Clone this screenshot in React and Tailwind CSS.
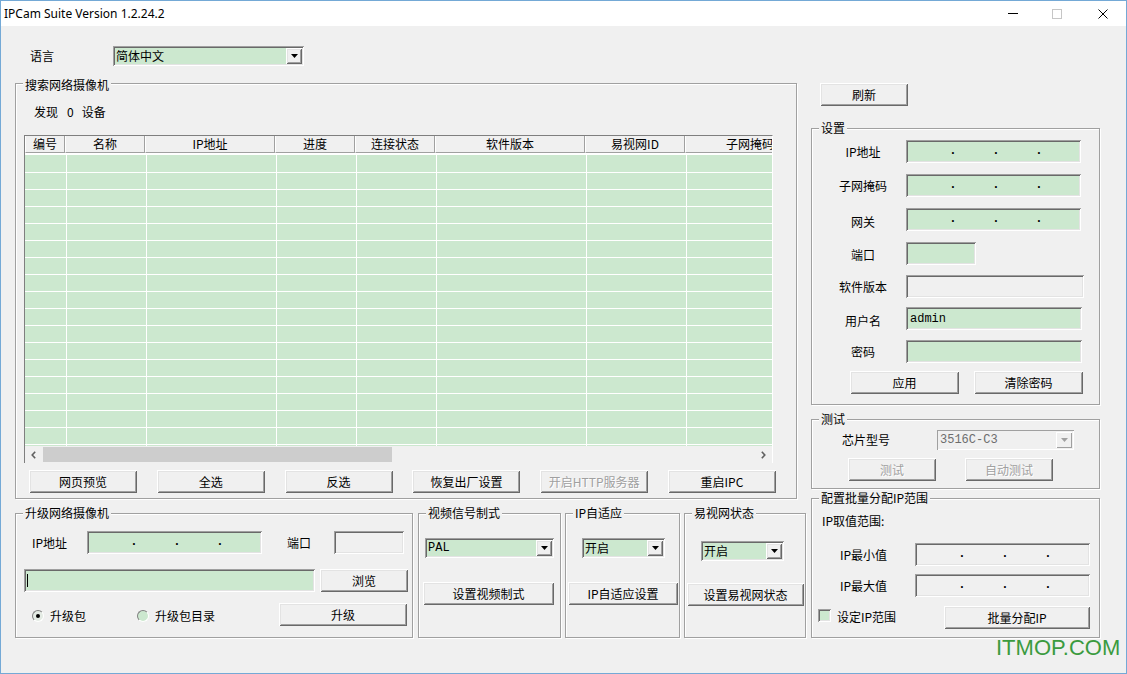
import React from "react";

const RAISED =
  "bg-[#f0f0f0] shadow-[inset_1px_1px_0_#ffffff,inset_-1px_-1px_0_#696969,inset_2px_2px_0_#e3e3e3,inset_-2px_-2px_0_#a0a0a0]";
const RAISED_DIS =
  "bg-[#f0f0f0] shadow-[inset_1px_1px_0_#ffffff,inset_-1px_-1px_0_#a0a0a0]";
const SUNKEN =
  "shadow-[inset_1px_1px_0_#a0a0a0,inset_-1px_-1px_0_#ffffff,inset_2px_2px_0_#696969,inset_-2px_-2px_0_#e3e3e3]";
const MONO = "font-['Liberation_Mono',monospace]";

function Btn({ className = "", disabled, children }) {
  return (
    <button
      type="button"
      className={`${RAISED} flex items-center justify-center shrink-0 h-[23px] leading-[16px] whitespace-nowrap ${
        disabled ? "text-[#a0a0a0] [text-shadow:1px_1px_0_#ffffff]" : "text-black"
      } ${className}`}
    >
      {children}
    </button>
  );
}

function Group({ title, className = "", labelClass = "top-[-9px]", children }) {
  return (
    <div
      className={`relative border border-[#a0a0a0] shadow-[inset_1px_1px_0_#ffffff,1px_1px_0_#ffffff] shrink-0 ${className}`}
    >
      <div
        className={`absolute left-[7px] ${labelClass} px-[2px] bg-[#f0f0f0] leading-[16px] whitespace-nowrap`}
      >
        {title}
      </div>
      {children}
    </div>
  );
}

function IpBox({ className = "", bg = "bg-[#cce8cf]" }) {
  return (
    <div className={`${SUNKEN} ${bg} h-[23px] flex items-center pl-[43px] gap-[35px] shrink-0 ${className}`}>
      {[0, 1, 2].map((i) => (
        <span
          key={i}
          className="w-[8px] text-center leading-none mb-[3px] font-['Liberation_Sans',sans-serif] font-bold text-[12px]"
        >
          .
        </span>
      ))}
    </div>
  );
}

function Combo({ className = "", text, mono, disabled }) {
  return (
    <div
      className={`${
        disabled
          ? "shadow-[inset_1px_1px_0_#a0a0a0,inset_-1px_-1px_0_#ffffff] bg-[#f0f0f0]"
          : SUNKEN + " bg-[#cce8cf]"
      } h-[20px] flex p-[2px] shrink-0 ${className}`}
    >
      <div
        className={`flex-1 flex items-center pl-[1px] leading-[16px] whitespace-nowrap ${mono ? MONO : ""} ${
          disabled ? "text-[#6d6d6d]" : ""
        }`}
      >
        {text}
      </div>
      <div className={`${disabled ? RAISED_DIS : RAISED} w-[16px] flex items-center justify-center`}>
        <svg width="7" height="4" viewBox="0 0 7 4">
          <polygon points="0,0 7,0 3.5,4" fill={disabled ? "#a0a0a0" : "#000000"} />
        </svg>
      </div>
    </div>
  );
}

const COLS = [
  ["编号", "w-[40px]"],
  ["名称", "w-[80px]"],
  ["IP地址", "w-[130px]"],
  ["进度", "w-[80px]"],
  ["连接状态", "w-[80px]"],
  ["软件版本", "w-[150px]"],
  ["易视网ID", "w-[100px]"],
  ["子网掩码", "w-[130px]"],
];

function Table() {
  return (
    <div className="mt-[15px] ml-[8px] w-[749px] h-[328px] flex flex-col overflow-hidden border-t border-l border-[#7f7f7f] border-r border-r-white">
      <div className="flex h-[17px] shrink-0 bg-[#f0f0f0]">
        {COLS.map(([t, w]) => (
          <div
            key={t}
            className={`${w} shrink-0 h-full border-l border-l-white border-r border-r-[#a0a0a0] border-b border-b-[#a0a0a0] flex items-center justify-center leading-[16px] whitespace-nowrap`}
          >
            {t}
          </div>
        ))}
      </div>
      <div className="flex-1 overflow-hidden bg-white pt-[2px]">
        {Array.from({ length: 18 }).map((_, i) => (
          <div
            key={i}
            className={`flex pl-[2px] bg-[#cce8cf] w-max border-b border-white ${i === 0 ? "h-[18px]" : "h-[17px]"}`}
          >
            {COLS.map(([t, w]) => (
              <div key={t} className={`${w} shrink-0 h-full border-r border-white`} />
            ))}
          </div>
        ))}
      </div>
      <div className="h-[17px] shrink-0 flex bg-[#f0f0f0]">
        <div className="w-[17px] flex items-center justify-center">
          <svg width="5" height="8" viewBox="0 0 5 8">
            <polyline points="4.2,0.8 1.2,4 4.2,7.2" fill="none" stroke="#606060" strokeWidth="1.6" />
          </svg>
        </div>
        <div className="w-[349px] ml-[1px] my-[1px] bg-[#cdcdcd]" />
        <div className="ml-auto w-[17px] flex items-center justify-center">
          <svg width="5" height="8" viewBox="0 0 5 8">
            <polyline points="0.8,0.8 3.8,4 0.8,7.2" fill="none" stroke="#606060" strokeWidth="1.6" />
          </svg>
        </div>
      </div>
    </div>
  );
}

function Radio({ checked, className = "" }) {
  return (
    <div
      className={`w-[12px] h-[12px] rounded-full border border-t-[#808080] border-l-[#808080] border-b-white border-r-white flex items-center justify-center shrink-0 ${
        checked ? "bg-[#e4ebe4]" : "bg-[#cce8cf]"
      } ${className}`}
    >
      {checked && <div className="w-[4px] h-[4px] rounded-full bg-black" />}
    </div>
  );
}

export default function App() {
  return (
    <div className="relative w-[1127px] h-[674px] overflow-hidden border border-[#74a9d6] bg-[#f0f0f0] flex flex-col text-[12px] leading-[16px] text-black font-['Noto_Sans_CJK_SC',sans-serif]">
      {/* Title bar */}
      <div className="h-[25px] shrink-0 bg-white flex items-center pl-[3px]">
        <span className="font-['Segoe_UI','Noto_Sans',sans-serif] text-[12px]">IPCam Suite Version 1.2.24.2</span>
        <div className="ml-auto flex h-full">
          <div className="w-[46px] h-full flex items-center justify-center">
            <div className="w-[10px] h-[1px] bg-black ml-[3px]" />
          </div>
          <div className="w-[46px] h-full flex items-center justify-center">
            <div className="w-[10px] h-[10px] border border-[#c6c6c6]" />
          </div>
          <div className="w-[46px] h-full flex items-center justify-center">
            <svg width="10" height="10" viewBox="0 0 10 10">
              <path d="M0.5 0.5L9.5 9.5M9.5 0.5L0.5 9.5" stroke="#000" strokeWidth="1" />
            </svg>
          </div>
        </div>
      </div>

      {/* Body */}
      <div className="flex-1 flex pl-[14px]">
        {/* Left column */}
        <div className="w-[790px] shrink-0 flex flex-col">
          <div className="mt-[20px] h-[20px] flex items-center">
            <span className="w-[98px] pl-[15px] shrink-0">语言</span>
            <Combo className="w-[191px]" text="简体中文" />
          </div>

          <Group title="搜索网络摄像机" labelClass="top-[-7px]" className="w-[782px] h-[416px] mt-[17px]">
            <div className="mt-[20px] ml-[18px] flex items-center h-[16px]">
              <span>发现</span>
              <span className="ml-[9px]">0</span>
              <span className="ml-[8px]">设备</span>
            </div>
            <Table />
            <div className="mt-[7px] ml-[13px] flex gap-[19.8px]">
              {["网页预览", "全选", "反选", "恢复出厂设置", "开启HTTP服务器", "重启IPC"].map((t, i) => (
                <Btn key={t} className="w-[108px]" disabled={i === 4}>
                  {t}
                </Btn>
              ))}
            </div>
          </Group>

          <div className="mt-[14px] flex">
            <Group title="升级网络摄像机" className="w-[398px] h-[125px]">
              <div className="mt-[17px] pl-[16px] flex items-center h-[23px]">
                <span className="w-[55px] shrink-0">IP地址</span>
                <IpBox className="w-[175px]" />
                <span className="ml-[25px] w-[47px] shrink-0">端口</span>
                <div className={`${SUNKEN} bg-[#f0f0f0] w-[70px] h-[23px] shrink-0`} />
              </div>
              <div className="mt-[15px] pl-[8px] flex items-center h-[23px]">
                <div className={`${SUNKEN} bg-[#cce8cf] w-[291px] h-[23px] flex items-center pl-[3px] shrink-0`}>
                  <div className="w-[1px] h-[13px] bg-black" />
                </div>
                <Btn className="ml-[5px] w-[88px]">浏览</Btn>
              </div>
              <div className="mt-[11px] pl-[16px] flex items-center h-[23px]">
                <Radio checked className="mt-[3px]" />
                <span className="ml-[6px] mt-[3px]">升级包</span>
                <Radio className="ml-[51px] mt-[3px]" />
                <span className="ml-[6px] mt-[3px]">升级包目录</span>
                <Btn className="ml-[64px] w-[128px]">升级</Btn>
              </div>
            </Group>

            <Group title="视频信号制式" className="ml-[5px] w-[143px] h-[125px]">
              <Combo className="ml-[6px] mt-[24px] w-[129px]" text="PAL" mono />
              <Btn className="ml-[4px] mt-[24px] w-[131px]">设置视频制式</Btn>
            </Group>

            <Group title="IP自适应" className="ml-[4px] w-[115px] h-[125px]">
              <Combo className="ml-[16px] mt-[24px] w-[83px]" text="开启" />
              <Btn className="ml-[2px] mt-[24px] w-[110px]">IP自适应设置</Btn>
            </Group>

            <Group title="易视网状态" className="ml-[4px] w-[122px] h-[125px]">
              <Combo className="ml-[16px] mt-[27px] w-[83px]" text="开启" />
              <Btn className="ml-[2px] mt-[22px] w-[117px]">设置易视网状态</Btn>
            </Group>
          </div>
        </div>

        {/* Right column */}
        <div className="ml-[6px] w-[289px] shrink-0 flex flex-col">
          <Btn className="mt-[57px] ml-[9px] w-[88px]">刷新</Btn>

          <Group title="设置" className="mt-[22px] w-[289px] h-[277px]">
            <div className="mt-[11px] ml-[8px] flex items-center h-[23px]">
              <span className="w-[86px] text-center shrink-0">IP地址</span>
              <IpBox className="w-[175px]" />
            </div>
            <div className="mt-[11px] ml-[8px] flex items-center h-[23px]">
              <span className="w-[86px] text-center shrink-0">子网掩码</span>
              <IpBox className="w-[175px]" />
            </div>
            <div className="mt-[11px] ml-[8px] flex items-center h-[23px]">
              <span className="w-[86px] text-center shrink-0 mt-[4px]">网关</span>
              <IpBox className="w-[175px]" />
            </div>
            <div className="mt-[11px] ml-[8px] flex items-center h-[23px]">
              <span className="w-[86px] text-center shrink-0 mt-[3px]">端口</span>
              <div className={`${SUNKEN} bg-[#cce8cf] w-[70px] h-[23px] shrink-0`} />
            </div>
            <div className="mt-[10px] ml-[8px] flex items-center h-[23px]">
              <span className="w-[86px] text-center shrink-0">软件版本</span>
              <div className={`${SUNKEN} bg-[#f0f0f0] w-[178px] h-[23px] shrink-0`} />
            </div>
            <div className="mt-[9px] ml-[8px] flex items-center h-[23px]">
              <span className="w-[86px] text-center shrink-0 mt-[5px]">用户名</span>
              <div
                className={`${SUNKEN} bg-[#cce8cf] w-[176px] h-[23px] shrink-0 flex items-center pl-[4px] ${MONO}`}
              >
                admin
              </div>
            </div>
            <div className="mt-[10px] ml-[8px] flex items-center h-[23px]">
              <span className="w-[86px] text-center shrink-0">密码</span>
              <div className={`${SUNKEN} bg-[#cce8cf] w-[176px] h-[23px] shrink-0`} />
            </div>
            <div className="mt-[8px] ml-[38px] flex gap-[15px]">
              <Btn className="w-[109px]">应用</Btn>
              <Btn className="w-[109px]">清除密码</Btn>
            </div>
          </Group>

          <Group title="测试" className="mt-[14px] w-[289px] h-[70px]">
            <div className="mt-[10px] ml-[8px] flex items-center h-[20px]">
              <span className="w-[92px] text-center shrink-0">芯片型号</span>
              <Combo className="ml-[25px] w-[137px]" text="3516C-C3" mono disabled />
            </div>
            <div className="mt-[8px] ml-[36px] flex gap-[29px]">
              <Btn className="w-[88px]" disabled>
                测试
              </Btn>
              <Btn className="w-[88px]" disabled>
                自动测试
              </Btn>
            </div>
          </Group>

          <Group title="配置批量分配IP范围" className="mt-[9px] w-[289px] h-[140px]">
            <div className="mt-[14px] ml-[10px] leading-[16px]">IP取值范围:</div>
            <div className="mt-[14px] ml-[28px] flex items-center h-[23px]">
              <span className="w-[75px] shrink-0">IP最小值</span>
              <IpBox className="w-[175px]" bg="bg-[#f0f0f0]" />
            </div>
            <div className="mt-[8px] ml-[28px] flex items-center h-[23px]">
              <span className="w-[75px] shrink-0">IP最大值</span>
              <IpBox className="w-[175px]" bg="bg-[#f0f0f0]" />
            </div>
            <div className="mt-[9px] flex items-center h-[23px]">
              <div className={`${SUNKEN} bg-[#cce8cf] ml-[6px] w-[13px] h-[13px] shrink-0 mb-[4px]`} />
              <span className="ml-[6px] mb-[2px]">设定IP范围</span>
              <Btn className="ml-auto mr-[9px] w-[146px]">批量分配IP</Btn>
            </div>
          </Group>
        </div>
      </div>

      <div className="absolute left-[995px] top-[636px] text-[22px] leading-none font-['Liberation_Sans',sans-serif] text-[#3b9b3f] whitespace-nowrap">
        ITMOP.COM
      </div>
    </div>
  );
}
